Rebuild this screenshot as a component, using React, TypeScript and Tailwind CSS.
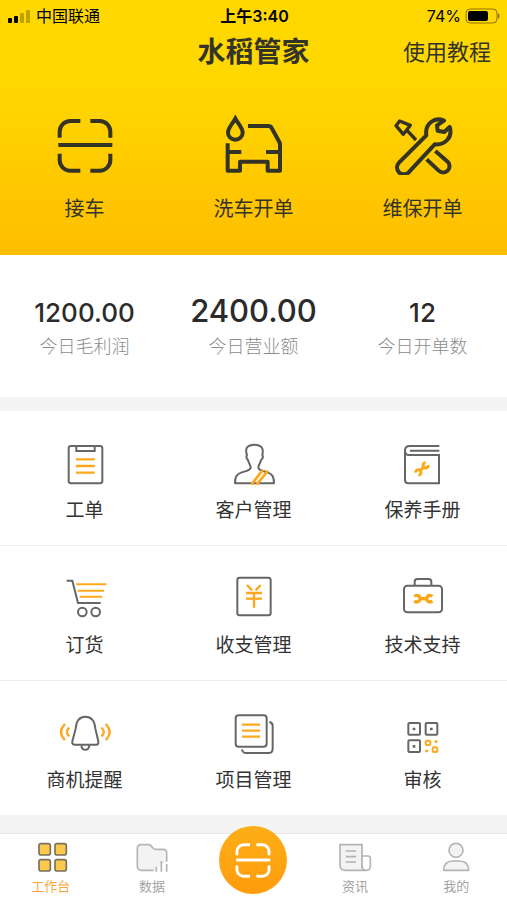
import type { ReactNode } from 'react'
import clsx from 'clsx'

const ORANGE = '#fda81c'
const GRAY = '#666666'

function ScanIcon({ className, strokeWidth = 12 }: { className: string; strokeWidth?: number }) {
  return (
    <svg viewBox="44 45 180 180" className={className} fill="none" stroke="currentColor" strokeWidth={strokeWidth}>
      <path d="M58 113V95a32 32 0 0 1 32-32h30M150 63h28a32 32 0 0 1 32 32v18M58 161v19a32 32 0 0 0 32 32h30M150 212h28a32 32 0 0 0 32-32v-19M54 135h162" />
    </svg>
  )
}

function CarWashIcon() {
  return (
    <svg viewBox="551 45 180 180" className="size-[60px]" fill="none" stroke="currentColor" strokeWidth="12">
      <path d="M585 56c-7 14-22 27-22 42a22 21 0 0 0 44 0c0-15-15-28-22-42Z" />
      <path d="M623 78h61c5 0 8 2 10 6l23 42q2 4 2 9v77h-37v-27h-83v27h-37v-82M563 156h40M677 156h41" strokeLinejoin="round" />
    </svg>
  )
}

function RepairIcon() {
  return (
    <svg viewBox="128 45 180 180" className="size-[60px]" fill="none" stroke="currentColor" strokeWidth="12" strokeLinejoin="round">
      <path d="M281 62c-28-12-58 8-53 44l-82 82a20 20 0 0 0 29 29l78-84c32 3 55-22 45-52l-16 15-20-4-2-16Z" />
      <path d="M148 63l32 13-21 27-22-26ZM170 91l27 29" strokeWidth="10" />
      <path d="M229 178l36 34a19 19 0 0 0 27-27l-37-32" />
    </svg>
  )
}

function OrderIcon() {
  return (
    <svg viewBox="50 39 168 144" className="h-12 w-14" fill="none" stroke={GRAY} strokeWidth="6">
      <rect x="85" y="48" width="101" height="112" rx="7" />
      <path d="M108 48v15h55V48" />
      <path d="M107 88h56M107 108h56M107 128h56" stroke={ORANGE} strokeWidth="7" />
    </svg>
  )
}

function CustomerIcon() {
  return (
    <svg viewBox="557 39 168 144" className="h-12 w-14" fill="none" stroke={GRAY} strokeWidth="6" strokeLinejoin="round">
      <path d="M584 160c0-20 5-27 18-32 16-6 27-6 29-15 0-9-6-12-8-23-5-4-6-9-3-15-8-22 3-30 22-31 20 1 29 9 24 31 3 6 2 11-4 15-2 11-8 14-8 23 2 9 15 9 29 15 13 5 18 12 18 32Z" />
      <path d="M668 119l-35 45M683 122l-34 42" stroke={ORANGE} strokeWidth="8" />
    </svg>
  )
}

function ManualIcon() {
  return (
    <svg viewBox="74 39 168 144" className="h-12 w-14" fill="none" stroke={GRAY} strokeWidth="6">
      <path d="M207 48h-89q-14 0-14 14v88q0 10 10 10h92V75h-89q-13 0-13-13M119 62h88" />
      <g stroke={ORANGE} strokeWidth="9">
        <path d="M166 98a8 8 0 1 0 8 7M144 135a8 8 0 1 0-8-7" />
        <path d="M163 109l-16 15" />
      </g>
    </svg>
  )
}

function CartIcon() {
  return (
    <svg viewBox="50 39 168 144" className="h-12 w-14" fill="none" stroke={GRAY} strokeWidth="6">
      <path d="M79 47h17l17 67h68" />
      <circle cx="126" cy="141" r="13" />
      <circle cx="166" cy="141" r="13" />
      <path d="M107 58h91M112 77h79M118 95h68" stroke={ORANGE} />
    </svg>
  )
}

function YuanIcon() {
  return (
    <svg viewBox="557 39 168 144" className="h-12 w-14 overflow-visible" fill="none" stroke={GRAY} strokeWidth="6">
      <rect x="591" y="38" width="100" height="113" rx="7" />
      <path d="M620 60l15 16M661 60l-15 16M617 84h48M617 101h48M641 84v44" stroke={ORANGE} strokeWidth="7" />
    </svg>
  )
}

function SupportIcon() {
  return (
    <svg viewBox="74 39 168 144" className="h-12 w-14" fill="none" stroke={GRAY} strokeWidth="6">
      <rect x="101" y="62" width="114" height="80" rx="10" />
      <path d="M133 62V50q0-8 8-8h34q8 0 8 8v12" />
      <g stroke={ORANGE} strokeWidth="10">
        <path d="M132 94a10 10 0 1 1 0 14M186 94a10 10 0 1 0 0 14" />
        <path d="M148 101h22" />
      </g>
    </svg>
  )
}

function BellIcon() {
  return (
    <svg viewBox="50 39 168 144" className="h-12 w-14" fill="none" stroke={GRAY} strokeWidth="6">
      <path d="M106 86c2-24 12-36 29-36s28 12 30 36l9 38q2 10-7 10h-63q-10 0-8-10Z" />
      <path d="M123 136c2 18 22 18 24 0" />
      <path d="M74 72q-24 24 0 48M87 83q-15 13 0 26M196 72q24 24 0 48M183 83q15 13 0 26" stroke={ORANGE} strokeWidth="7" />
    </svg>
  )
}

function ProjectIcon() {
  return (
    <svg viewBox="557 39 168 144" className="h-12 w-14" fill="none" stroke={GRAY} strokeWidth="6">
      <rect x="586" y="46" width="93" height="94" rx="9" />
      <path d="M687 66q10 2 10 11v69q0 13-13 13h-67q-10 0-12-11" />
      <path d="M605 74h54M605 92h54M605 110h54" stroke={ORANGE} strokeWidth="7" />
    </svg>
  )
}

function AuditIcon() {
  return (
    <svg viewBox="74 39 168 144" className="h-12 w-14" fill="none" stroke={GRAY} strokeWidth="6">
      <rect x="114" y="69" width="35" height="35" rx="3" />
      <rect x="166" y="69" width="35" height="35" rx="3" />
      <rect x="114" y="121" width="35" height="35" rx="3" />
      <path d="M127 87h8M179 87h8M127 139h8" strokeWidth="8" />
      <g stroke={ORANGE}>
        <rect x="166" y="122" width="14" height="13" rx="4" />
        <rect x="187" y="142" width="14" height="14" rx="4" />
        <path d="M193 125h8M165 153h8" strokeWidth="8" />
      </g>
    </svg>
  )
}

function WorkbenchIcon() {
  return (
    <svg viewBox="92 93 120 96" className="h-8 w-10" fill="#fcc94c" stroke="#777360" strokeWidth="5">
      <rect x="116" y="101" width="34" height="34" rx="6" />
      <rect x="164" y="101" width="34" height="34" rx="6" />
      <rect x="116" y="149" width="34" height="34" rx="6" />
      <rect x="164" y="149" width="34" height="34" rx="6" />
    </svg>
  )
}

function DataIcon() {
  return (
    <svg viewBox="396 93 120 96" className="h-8 w-10" fill="none" stroke="#b4b4b4" strokeWidth="5">
      <path d="M461 181h-36q-13 0-13-13v-52q0-12 12-12h22q6 0 9 6l3 3q3 5 9 5h22q11 0 11 11v26" fill="#f3f3f3" />
      <path d="M469 170v15M484 153v32M500 162v23" />
    </svg>
  )
}

function NewsIcon() {
  return (
    <svg viewBox="105 93 120 96" className="h-8 w-10" fill="#f3f3f3" stroke="#b4b4b4" strokeWidth="5">
      <path d="M120 104h66v65q2 12 13 12h-62q-17 0-17-17Z" />
      <path d="M186 138h18q7 0 7 7v23q0 13-12 13t-13-13Z" fill="#ffffff" />
      <path d="M137 123h31M137 140h31M137 156h31" />
    </svg>
  )
}

function MineIcon() {
  return (
    <svg viewBox="409 93 120 96" className="h-8 w-10" fill="#f3f3f3" stroke="#b4b4b4" strokeWidth="5">
      <circle cx="469" cy="121" r="21" />
      <path d="M432 181c0-18 10-28 28-28h19c18 0 28 10 28 28Z" strokeLinejoin="round" />
    </svg>
  )
}

const actions = [
  { label: '接车', icon: <ScanIcon className="size-[60px]" /> },
  { label: '洗车开单', icon: <CarWashIcon /> },
  { label: '维保开单', icon: <RepairIcon /> },
]

const stats = [
  { label: '今日毛利润', value: '1200.00' },
  { label: '今日营业额', value: '2400.00', main: true },
  { label: '今日开单数', value: '12' },
]

const menu = [
  [
    { label: '工单', icon: <OrderIcon /> },
    { label: '客户管理', icon: <CustomerIcon /> },
    { label: '保养手册', icon: <ManualIcon /> },
  ],
  [
    { label: '订货', icon: <CartIcon /> },
    { label: '收支管理', icon: <YuanIcon /> },
    { label: '技术支持', icon: <SupportIcon /> },
  ],
  [
    { label: '商机提醒', icon: <BellIcon /> },
    { label: '项目管理', icon: <ProjectIcon /> },
    { label: '审核', icon: <AuditIcon /> },
  ],
]

function StatusBar() {
  return (
    <div className="grid h-8 grid-cols-3 items-center pr-1.5 pl-2 text-base text-black">
      <div className="flex items-center gap-1">
        <svg viewBox="0 0 24 14" className="h-3.5 w-6">
          <rect x="0" y="9" width="4" height="5" rx="1" />
          <rect x="6" y="7" width="4" height="7" rx="1" />
          <rect x="12" y="4" width="4" height="10" rx="1" opacity="0.25" />
          <rect x="18" y="1" width="4" height="13" rx="1" opacity="0.25" />
        </svg>
        中国联通
      </div>
      <div className="text-center font-semibold">上午3:40</div>
      <div className="flex items-center justify-end gap-1">
        74%
        <svg viewBox="0 0 36 16" className="h-4 w-9">
          <rect x="1" y="1" width="31" height="14" rx="4" fill="none" stroke="#000" strokeOpacity="0.45" />
          <rect x="3" y="3" width="20" height="10" rx="2" />
          <path d="M33 5q3 3 0 6Z" opacity="0.5" />
        </svg>
      </div>
    </div>
  )
}

function Tab({ label, icon, active }: { label: string; icon: ReactNode; active?: boolean }) {
  return (
    <button className={clsx('flex flex-col items-center pt-[7px] pb-1.5 text-[13px] leading-4', active ? 'text-[#fda638]' : 'text-[#a3a3a3]')}>
      {icon}
      <span className="mt-[5px]">{label}</span>
    </button>
  )
}

export default function App() {
  return (
    <div className="min-h-screen bg-white font-[Inter,'Noto_Sans_CJK_SC',sans-serif] text-[#333326]">
      <header className="bg-linear-to-b from-[#ffd800] from-30% to-[#ffbe00]">
        <StatusBar />
        <div className="grid h-10 grid-cols-3 items-center">
          <h1 className="col-start-2 text-center text-[28px] leading-10 font-bold whitespace-nowrap">水稻管家</h1>
          <a href="#guide" className="justify-self-end pr-4 text-[22px] whitespace-nowrap">使用教程</a>
        </div>
        <div className="grid grid-cols-3 pt-[43px] pb-8">
          {actions.map((a) => (
            <button key={a.label} className="flex flex-col items-center text-xl leading-7">
              {a.icon}
              <span className="mt-5">{a.label}</span>
            </button>
          ))}
        </div>
      </header>

      <section className="grid grid-cols-3 items-end pt-[34px] pb-[38px] text-center">
        {stats.map((s) => (
          <div key={s.label}>
            <div className={clsx('font-medium text-[#2b2b2b]', s.main ? 'text-[31px] leading-[44px]' : 'text-[26px] leading-10')}>{s.value}</div>
            <div className="mt-0.5 text-lg leading-6 font-light text-[#8c8c8c]">{s.label}</div>
          </div>
        ))}
      </section>

      <main className="border-t-14 border-b-18 border-[#f4f4f4]">
        {menu.map((row) => (
          <div key={row[0].label} className="grid grid-cols-3 border-b border-[#ebebeb] last:border-b-0">
            {row.map((m) => (
              <button key={m.label} className="flex flex-col items-center pt-8 pb-5 text-[19px] leading-7 text-[#333333]">
                {m.icon}
                <span className="mt-1.5">{m.label}</span>
              </button>
            ))}
          </div>
        ))}
      </main>

      <nav className="grid grid-cols-5 border-t border-[#e6e6e6] bg-white">
        <Tab label="工作台" icon={<WorkbenchIcon />} active />
        <Tab label="数据" icon={<DataIcon />} />
        <button aria-label="扫一扫" className="-mt-2 flex size-[68px] items-center justify-center justify-self-center rounded-full bg-linear-to-b from-[#fdae17] to-[#ff9c0c] text-white">
          <ScanIcon className="size-[38px]" strokeWidth={14} />
        </button>
        <Tab label="资讯" icon={<NewsIcon />} />
        <Tab label="我的" icon={<MineIcon />} />
      </nav>
    </div>
  )
}
